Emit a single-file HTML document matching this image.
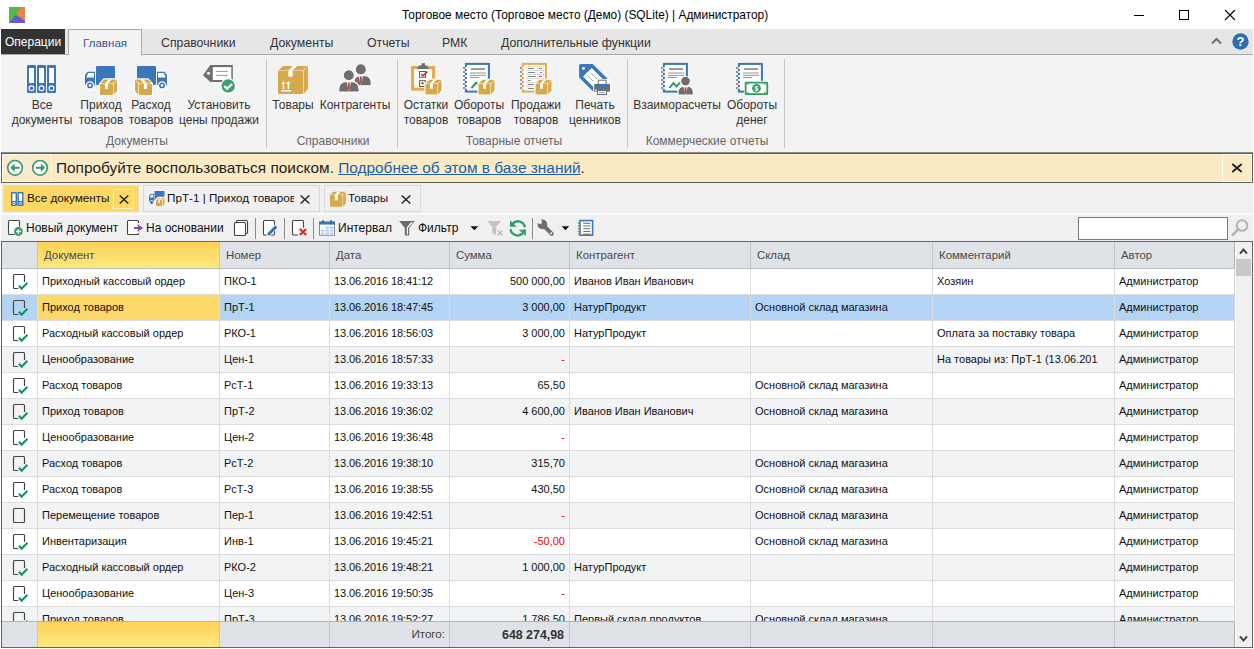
<!DOCTYPE html><html><head><meta charset="utf-8"><style>
*{box-sizing:border-box}
html,body{margin:0;padding:0}
body{width:1254px;height:649px;overflow:hidden;position:relative;background:#fff;font-family:"Liberation Sans",sans-serif;color:#222}
.ab{position:absolute}
.t{position:absolute;white-space:nowrap;line-height:1}
</style></head><body>
<svg class="ab" style="left:9px;top:7px" width="16" height="16" viewBox="0 0 16 16"><rect width="16" height="16" fill="#55b84a"/><polygon points="12,0 16,0 16,14 6.8,7.8" fill="#e3844a"/><polygon points="0,16 6.8,7.8 16,14 16,16" fill="#6559d6"/></svg>
<div class="t" style="left:402px;top:10px;font-size:11.9px;color:#000">Торговое место (Торговое место (Демо) (SQLite) | Администратор)</div>
<div class="ab" style="left:1134px;top:15px;width:10px;height:1px;background:#000"></div>
<div class="ab" style="left:1179px;top:10px;width:10px;height:10px;border:1px solid #000"></div>
<svg class="ab" style="left:1224px;top:9px" width="12" height="12" viewBox="0 0 12 12"><path d="M1 1L11 11M11 1L1 11" stroke="#000" stroke-width="1.1"/></svg>
<div class="ab" style="left:1px;top:29px;width:1252px;height:26px;background:#e6e6e6;border-bottom:1px solid #a8a8a8"></div>
<div class="ab" style="left:1px;top:29px;width:64px;height:25px;background:#333"></div>
<div class="t" style="left:5px;top:36px;font-size:12px;color:#fff">Операции</div>
<div class="ab" style="left:68px;top:29px;width:74px;height:27px;background:#f3f3f3;border:1px solid #a8a8a8;border-bottom:none"></div>
<div class="t" style="left:83px;top:37px;font-size:11.6px;color:#34579c">Главная</div>
<div class="t" style="left:161px;top:37px;font-size:12.3px;color:#333">Справочники</div>
<div class="t" style="left:270px;top:37px;font-size:12.3px;color:#333">Документы</div>
<div class="t" style="left:367px;top:37px;font-size:12.3px;color:#333">Отчеты</div>
<div class="t" style="left:442px;top:37px;font-size:12.3px;color:#333">РМК</div>
<div class="t" style="left:501px;top:37px;font-size:12.3px;color:#333">Дополнительные функции</div>
<svg class="ab" style="left:1211px;top:37px" width="11" height="8" viewBox="0 0 11 8"><path d="M1 6.5L5.5 2L10 6.5" stroke="#707070" stroke-width="2" fill="none"/></svg>
<svg class="ab" style="left:1232px;top:33px" width="17" height="17" viewBox="0 0 17 17"><circle cx="8.5" cy="8.5" r="8.2" fill="#2d6db5"/><text x="8.5" y="13.2" text-anchor="middle" font-family="Liberation Sans" font-weight="bold" font-size="13" fill="#fff">?</text></svg>
<div class="ab" style="left:1px;top:55px;width:1252px;height:97px;background:#f3f3f3"></div>
<div class="ab" style="left:1px;top:152px;width:1252px;height:1px;background:#8a8a8a"></div>
<div class="ab" style="left:266px;top:59px;width:1px;height:89px;background:#c6c6c6"></div>
<div class="ab" style="left:397px;top:59px;width:1px;height:89px;background:#c6c6c6"></div>
<div class="ab" style="left:627px;top:59px;width:1px;height:89px;background:#c6c6c6"></div>
<div class="ab" style="left:784px;top:59px;width:1px;height:89px;background:#c6c6c6"></div>
<div class="t" style="left:-108px;width:300px;text-align:center;top:99px;font-size:12px;color:#333">Все</div>
<div class="t" style="left:-108px;width:300px;text-align:center;top:114px;font-size:12px;color:#333">документы</div>
<div class="t" style="left:-49px;width:300px;text-align:center;top:99px;font-size:12px;color:#333">Приход</div>
<div class="t" style="left:-49px;width:300px;text-align:center;top:114px;font-size:12px;color:#333">товаров</div>
<div class="t" style="left:1px;width:300px;text-align:center;top:99px;font-size:12px;color:#333">Расход</div>
<div class="t" style="left:1px;width:300px;text-align:center;top:114px;font-size:12px;color:#333">товаров</div>
<div class="t" style="left:69px;width:300px;text-align:center;top:99px;font-size:12px;color:#333">Установить</div>
<div class="t" style="left:69px;width:300px;text-align:center;top:114px;font-size:12px;color:#333">цены продажи</div>
<div class="t" style="left:143px;width:300px;text-align:center;top:99px;font-size:12px;color:#333">Товары</div>
<div class="t" style="left:205px;width:300px;text-align:center;top:99px;font-size:12px;color:#333">Контрагенты</div>
<div class="t" style="left:276px;width:300px;text-align:center;top:99px;font-size:12px;color:#333">Остатки</div>
<div class="t" style="left:276px;width:300px;text-align:center;top:114px;font-size:12px;color:#333">товаров</div>
<div class="t" style="left:329px;width:300px;text-align:center;top:99px;font-size:12px;color:#333">Обороты</div>
<div class="t" style="left:329px;width:300px;text-align:center;top:114px;font-size:12px;color:#333">товаров</div>
<div class="t" style="left:386px;width:300px;text-align:center;top:99px;font-size:12px;color:#333">Продажи</div>
<div class="t" style="left:386px;width:300px;text-align:center;top:114px;font-size:12px;color:#333">товаров</div>
<div class="t" style="left:445px;width:300px;text-align:center;top:99px;font-size:12px;color:#333">Печать</div>
<div class="t" style="left:445px;width:300px;text-align:center;top:114px;font-size:12px;color:#333">ценников</div>
<div class="t" style="left:527px;width:300px;text-align:center;top:99px;font-size:12px;color:#333">Взаиморасчеты</div>
<div class="t" style="left:602px;width:300px;text-align:center;top:99px;font-size:12px;color:#333">Обороты</div>
<div class="t" style="left:602px;width:300px;text-align:center;top:114px;font-size:12px;color:#333">денег</div>
<div class="t" style="left:-13px;width:300px;text-align:center;top:135px;font-size:12px;color:#666">Документы</div>
<div class="t" style="left:183px;width:300px;text-align:center;top:135px;font-size:12px;color:#666">Справочники</div>
<div class="t" style="left:364px;width:300px;text-align:center;top:135px;font-size:12px;color:#666">Товарные отчеты</div>
<div class="t" style="left:557px;width:300px;text-align:center;top:135px;font-size:12px;color:#666">Коммерческие отчеты</div>
<svg class="ab" style="left:0;top:55px" width="800" height="100" viewBox="0 55 800 100"><rect x="27" y="65" width="9" height="28" rx="1.3" fill="#3b76b8"/><rect x="29" y="68" width="5" height="15" fill="#fff"/><circle cx="31.5" cy="88.3" r="2.4" fill="none" stroke="#fff" stroke-width="1.1"/><rect x="37" y="65" width="9" height="28" rx="1.3" fill="#3b76b8"/><rect x="39" y="68" width="5" height="15" fill="#fff"/><circle cx="41.5" cy="88.3" r="2.4" fill="none" stroke="#fff" stroke-width="1.1"/><rect x="47" y="65" width="9" height="28" rx="1.3" fill="#3b76b8"/><rect x="49" y="68" width="5" height="15" fill="#fff"/><circle cx="51.5" cy="88.3" r="2.4" fill="none" stroke="#fff" stroke-width="1.1"/><g transform="translate(85,63)"><rect x="11" y="3" width="19" height="19" rx="1.2" fill="#3b76b8"/><path d="M0 22 V12 L2.6 8.7 H10 V22 Z" fill="#3b76b8"/><path d="M1.4 14.6 L3.2 10 H9 V14.6 Z" fill="#fff"/><circle cx="5" cy="22.4" r="3.6" fill="#3b76b8" stroke="#fff" stroke-width="1.3"/><circle cx="5" cy="22.4" r="1.3" fill="#fff"/><polygon points="15,32 15,21 19,16.4 32,16.4 32,28 28,32" fill="#fff" stroke="#fff" stroke-width="2.2" stroke-linejoin="round"/><rect x="15" y="21" width="13" height="11" rx="0.8" fill="#d6a94c"/><polygon points="15.3,20.4 19,16.4 32,16.4 27.7,20.4" fill="#d6a94c"/><polygon points="28.6,20.7 32,16.7 32,28 28.6,32" fill="#d6a94c"/><rect x="19.94" y="21" width="3.12" height="4.95" fill="#fff"/><polygon points="19.94,20.4 23.540000000000003,16.4 26.660000000000004,16.4 23.060000000000002,20.4" fill="#fff"/></g><g transform="translate(167,63) scale(-1,1)"><rect x="11" y="3" width="19" height="19" rx="1.2" fill="#3b76b8"/><path d="M0 22 V12 L2.6 8.7 H10 V22 Z" fill="#3b76b8"/><path d="M1.4 14.6 L3.2 10 H9 V14.6 Z" fill="#fff"/><circle cx="5" cy="22.4" r="3.6" fill="#3b76b8" stroke="#fff" stroke-width="1.3"/><circle cx="5" cy="22.4" r="1.3" fill="#fff"/><polygon points="15,32 15,21 19,16.4 32,16.4 32,28 28,32" fill="#fff" stroke="#fff" stroke-width="2.2" stroke-linejoin="round"/><rect x="15" y="21" width="13" height="11" rx="0.8" fill="#d6a94c"/><polygon points="15.3,20.4 19,16.4 32,16.4 27.7,20.4" fill="#d6a94c"/><polygon points="28.6,20.7 32,16.7 32,28 28.6,32" fill="#d6a94c"/><rect x="19.94" y="21" width="3.12" height="4.95" fill="#fff"/><polygon points="19.94,20.4 23.540000000000003,16.4 26.660000000000004,16.4 23.060000000000002,20.4" fill="#fff"/></g><g transform="translate(198,60)"><path d="M5 15.3 L12.3 5 H34.8 V22 H12.3 Z" fill="#6e6e6e"/><rect x="14.8" y="7.1" width="18.5" height="12.9" fill="#fff"/><rect x="18.2" y="10.9" width="11.7" height="1" fill="#9a9a9a"/><rect x="18.2" y="14.9" width="11.7" height="1" fill="#9a9a9a"/><circle cx="10.5" cy="13.3" r="1.5" fill="#fff"/><circle cx="30.2" cy="25.9" r="7.3" fill="#3fa072" stroke="#fff" stroke-width="1.2"/><path d="M26.3 26 L29.2 28.8 L34.2 23.7" stroke="#fff" stroke-width="2.2" fill="none"/></g><rect x="278" y="71" width="25" height="23" rx="0.8" fill="#d6a94c"/><polygon points="278.3,70.4 283,66 308,66 302.7,70.4" fill="#d6a94c"/><polygon points="303.6,70.7 308,66.3 308,89 303.6,94" fill="#d6a94c"/><rect x="288.4" y="71" width="4.2" height="5.6" fill="#fff"/><polygon points="288.4,70.4 292.9,66 297.09999999999997,66 292.59999999999997,70.4" fill="#fff"/><g fill="#fff"><path d="M283.4 81 L281.2 84 H282.7 V88.9 H284.1 V84 H285.6 Z"/><path d="M288.4 81 L286.2 84 H287.7 V88.9 H289.1 V84 H290.6 Z"/><rect x="281.1" y="90" width="9.7" height="1.5"/></g><path d="M353.8 84.80000000000001 V82.708 C353.8 77.9578 356.3578 75.4 361.108 75.4 H363.892 C368.6422 75.4 371.2 77.9578 371.2 82.708 V84.80000000000001 Q371.2 85.80000000000001 370.2 85.80000000000001 H354.8 Q353.8 85.80000000000001 353.8 84.80000000000001 Z" fill="#6e6e6e" stroke="#fff" stroke-width="1.1"/><circle cx="360.8" cy="69.4" r="5.6" fill="#6e6e6e" stroke="#fff" stroke-width="1.1"/><path d="M358.40000000000003 75.10000000000001 L360.8 85.00000000000001 L363.2 75.10000000000001 Z" fill="#fff"/><path d="M359.8 76.60000000000001 H361.8 L361.6 82.68 L360.8 83.80000000000001 L360.0 82.68 Z" fill="#d03a2a"/><path d="M338.6 91.0 V89.88000000000001 C338.6 84.36800000000001 341.56800000000004 81.4 347.08000000000004 81.4 H350.72 C356.232 81.4 359.20000000000005 84.36800000000001 359.20000000000005 89.88000000000001 V91.0 Q359.20000000000005 92.0 358.20000000000005 92.0 H339.6 Q338.6 92.0 338.6 91.0 Z" fill="#6e6e6e" stroke="#fff" stroke-width="1.1"/><circle cx="348.8" cy="75.3" r="5.6" fill="#6e6e6e" stroke="#fff" stroke-width="1.1"/><path d="M346.40000000000003 81.10000000000001 L348.8 91.2 L351.2 81.10000000000001 Z" fill="#fff"/><path d="M347.8 82.60000000000001 H349.8 L349.6 88.82000000000001 L348.8 90.0 L348.0 88.82000000000001 Z" fill="#d03a2a"/><g transform="translate(408,58)"><rect x="4.6" y="9.5" width="21" height="21.7" fill="#fff" stroke="#e8a94c" stroke-width="3"/><path d="M9 11 L11 7.5 H13.5 V5.2 H17 V7.5 H19 L21 11 Z" fill="#6e6e6e"/><rect x="11.6" y="13.5" width="5.8" height="5.8" fill="none" stroke="#555" stroke-width="1"/><rect x="11.6" y="22.7" width="5.8" height="5.8" fill="none" stroke="#555" stroke-width="1"/><path d="M13.3 16 L15 17.8 L19.5 13.5" stroke="#cc3322" stroke-width="1.6" fill="none"/><path d="M13.5 24.5 L15.5 26" stroke="#cc3322" stroke-width="1.6" fill="none"/><polygon points="17.5,36.5 17.5,26 21.5,21.8 33.5,21.8 33.5,32.5 29.5,36.5" fill="#fff" stroke="#fff" stroke-width="2.2" stroke-linejoin="round"/><rect x="17.5" y="26" width="12" height="10.5" rx="0.8" fill="#d6a94c"/><polygon points="17.8,25.4 21.5,21.8 33.5,21.8 29.2,25.4" fill="#d6a94c"/><polygon points="30.1,25.7 33.5,22.1 33.5,32.5 30.1,36.5" fill="#d6a94c"/><rect x="22.06" y="26" width="2.88" height="4.7250000000000005" fill="#fff"/><polygon points="22.06,25.4 25.66,21.8 28.54,21.8 24.939999999999998,25.4" fill="#fff"/></g><g transform="translate(460,58)"><rect x="5.9" y="5.9" width="23" height="27.7" fill="#fff" stroke="#3b76b8" stroke-width="2"/><rect x="3" y="9.1" width="2.2" height="1.8" fill="#8a8a8a"/><rect x="5.2" y="9.1" width="2" height="1.8" fill="#fff"/><rect x="3" y="13.1" width="2.2" height="1.8" fill="#8a8a8a"/><rect x="5.2" y="13.1" width="2" height="1.8" fill="#fff"/><rect x="3" y="17.1" width="2.2" height="1.8" fill="#8a8a8a"/><rect x="5.2" y="17.1" width="2" height="1.8" fill="#fff"/><rect x="3" y="21.1" width="2.2" height="1.8" fill="#8a8a8a"/><rect x="5.2" y="21.1" width="2" height="1.8" fill="#fff"/><rect x="3" y="25.1" width="2.2" height="1.8" fill="#8a8a8a"/><rect x="5.2" y="25.1" width="2" height="1.8" fill="#fff"/><rect x="3" y="29.1" width="2.2" height="1.8" fill="#8a8a8a"/><rect x="5.2" y="29.1" width="2" height="1.8" fill="#fff"/><rect x="11" y="10.2" width="14" height="1.7" fill="#8a8a8a"/><rect x="10" y="14.55" width="16" height="0.9" fill="#8a8a8a"/><rect x="10" y="16.85" width="16" height="0.9" fill="#8a8a8a"/><rect x="10" y="19.05" width="9" height="0.9" fill="#8a8a8a"/></g><g transform="translate(460,58)"><path d="M11.5 30 L16 25" stroke="#2f9b62" stroke-width="2" fill="none"/><path d="M14.2 24 H17.6 V27.4 Z" fill="#2f9b62"/></g><g transform="translate(460,58)"><polygon points="18.5,36.5 18.5,26 22.5,21.8 34.5,21.8 34.5,32.5 30.5,36.5" fill="#fff" stroke="#fff" stroke-width="2.2" stroke-linejoin="round"/><rect x="18.5" y="26" width="12" height="10.5" rx="0.8" fill="#d6a94c"/><polygon points="18.8,25.4 22.5,21.8 34.5,21.8 30.2,25.4" fill="#d6a94c"/><polygon points="31.1,25.7 34.5,22.1 34.5,32.5 31.1,36.5" fill="#d6a94c"/><rect x="23.06" y="26" width="2.88" height="4.7250000000000005" fill="#fff"/><polygon points="23.06,25.4 26.66,21.8 29.54,21.8 25.939999999999998,25.4" fill="#fff"/></g><g transform="translate(517,58)"><rect x="5.9" y="5.9" width="23" height="27.7" fill="#fff" stroke="#e8a94c" stroke-width="2"/><rect x="3" y="9.1" width="2.2" height="1.8" fill="#8a8a8a"/><rect x="5.2" y="9.1" width="2" height="1.8" fill="#fff"/><rect x="3" y="13.1" width="2.2" height="1.8" fill="#8a8a8a"/><rect x="5.2" y="13.1" width="2" height="1.8" fill="#fff"/><rect x="3" y="17.1" width="2.2" height="1.8" fill="#8a8a8a"/><rect x="5.2" y="17.1" width="2" height="1.8" fill="#fff"/><rect x="3" y="21.1" width="2.2" height="1.8" fill="#8a8a8a"/><rect x="5.2" y="21.1" width="2" height="1.8" fill="#fff"/><rect x="3" y="25.1" width="2.2" height="1.8" fill="#8a8a8a"/><rect x="5.2" y="25.1" width="2" height="1.8" fill="#fff"/><rect x="3" y="29.1" width="2.2" height="1.8" fill="#8a8a8a"/><rect x="5.2" y="29.1" width="2" height="1.8" fill="#fff"/></g><g transform="translate(517,58)"><rect x="9.5" y="8.2" width="17.5" height="24.5" fill="#d4d4d4"/><rect x="10.2" y="8.9" width="9.8" height="3.2" fill="#fff"/><rect x="20.6" y="8.9" width="5.8" height="3.2" fill="#fff"/><rect x="11" y="10.1" width="6" height="0.9" fill="#777"/><rect x="10.2" y="12.9" width="9.8" height="3.2" fill="#fff"/><rect x="20.6" y="12.9" width="5.8" height="3.2" fill="#fff"/><rect x="11" y="14.1" width="7" height="0.9" fill="#777"/><rect x="10.2" y="16.9" width="9.8" height="3.2" fill="#fff"/><rect x="20.6" y="16.9" width="5.8" height="3.2" fill="#fff"/><rect x="11" y="18.099999999999998" width="8" height="0.9" fill="#777"/><rect x="10.2" y="20.9" width="9.8" height="3.2" fill="#fff"/><rect x="20.6" y="20.9" width="5.8" height="3.2" fill="#fff"/><rect x="11" y="22.099999999999998" width="2.5" height="0.9" fill="#777"/><rect x="10.2" y="24.9" width="9.8" height="3.2" fill="#fff"/><rect x="20.6" y="24.9" width="5.8" height="3.2" fill="#fff"/><rect x="11" y="26.099999999999998" width="6" height="0.9" fill="#777"/><rect x="10.2" y="28.9" width="9.8" height="3.2" fill="#fff"/><rect x="20.6" y="28.9" width="5.8" height="3.2" fill="#fff"/><rect x="11" y="30.099999999999998" width="6" height="0.9" fill="#777"/><rect x="22" y="10.1" width="3" height="0.9" fill="#777"/><rect x="23" y="14.1" width="2" height="0.9" fill="#777"/><rect x="22" y="18.1" width="3" height="0.9" fill="#cc3322"/><polygon points="18.5,36.5 18.5,26 22.5,21.8 34.5,21.8 34.5,32.5 30.5,36.5" fill="#fff" stroke="#fff" stroke-width="2.2" stroke-linejoin="round"/><rect x="18.5" y="26" width="12" height="10.5" rx="0.8" fill="#d6a94c"/><polygon points="18.8,25.4 22.5,21.8 34.5,21.8 30.2,25.4" fill="#d6a94c"/><polygon points="31.1,25.7 34.5,22.1 34.5,32.5 31.1,36.5" fill="#d6a94c"/><rect x="23.06" y="26" width="2.88" height="4.7250000000000005" fill="#fff"/><polygon points="23.06,25.4 26.66,21.8 29.54,21.8 25.939999999999998,25.4" fill="#fff"/></g><g transform="translate(576,58)"><path d="M3.1 7.5 Q3.1 5.9 4.7 5.9 H16.7 L34 23.2 V25 L16.7 33 L3.1 19.5 Z" fill="#3b76b8"/><path d="M7 18.5 L15.7 10 L28 22.3 L19.3 31 Z" fill="#fff"/><path d="M15 15 L21 21 M12 18 L18.5 24.5" stroke="#888" stroke-width="0.8"/><circle cx="7.5" cy="10.5" r="1.4" fill="#fff"/><rect x="17.2" y="21" width="17.8" height="15" fill="#fff"/><rect x="22.3" y="22.2" width="7.8" height="4.5" fill="#fff" stroke="#6e6e6e" stroke-width="1"/><rect x="18.2" y="25.9" width="15.8" height="7.7" fill="#6e6e6e"/><rect x="21" y="26.2" width="10" height="2.8" fill="#3b76b8"/><rect x="19" y="31.5" width="2" height="1" fill="#fff"/><rect x="21.5" y="32.5" width="9" height="4" fill="#fff" stroke="#6e6e6e" stroke-width="1"/><rect x="23" y="34" width="6" height="0.8" fill="#6a9ad0"/></g><g transform="translate(658,58)"><rect x="5.9" y="5.9" width="23" height="27.7" fill="#fff" stroke="#3b76b8" stroke-width="2"/><rect x="3" y="9.1" width="2.2" height="1.8" fill="#8a8a8a"/><rect x="5.2" y="9.1" width="2" height="1.8" fill="#fff"/><rect x="3" y="13.1" width="2.2" height="1.8" fill="#8a8a8a"/><rect x="5.2" y="13.1" width="2" height="1.8" fill="#fff"/><rect x="3" y="17.1" width="2.2" height="1.8" fill="#8a8a8a"/><rect x="5.2" y="17.1" width="2" height="1.8" fill="#fff"/><rect x="3" y="21.1" width="2.2" height="1.8" fill="#8a8a8a"/><rect x="5.2" y="21.1" width="2" height="1.8" fill="#fff"/><rect x="3" y="25.1" width="2.2" height="1.8" fill="#8a8a8a"/><rect x="5.2" y="25.1" width="2" height="1.8" fill="#fff"/><rect x="3" y="29.1" width="2.2" height="1.8" fill="#8a8a8a"/><rect x="5.2" y="29.1" width="2" height="1.8" fill="#fff"/><rect x="11" y="10.2" width="14" height="1.7" fill="#8a8a8a"/><rect x="10" y="14.55" width="16" height="0.9" fill="#8a8a8a"/><rect x="10" y="16.85" width="16" height="0.9" fill="#8a8a8a"/><rect x="10" y="19.05" width="9" height="0.9" fill="#8a8a8a"/></g><g transform="translate(658,58)"><path d="M11.5 30 L15.5 25 L18.5 28.5 L22 24.5" stroke="#2f9b62" stroke-width="2" fill="none"/><path d="M20 36.0 V34.768 C20 30.5638 22.2638 28.3 26.468 28.3 H28.932 C33.1362 28.3 35.4 30.5638 35.4 34.768 V36.0 Q35.4 37.0 34.4 37.0 H21 Q20 37.0 20 36.0 Z" fill="#6e6e6e" stroke="#fff" stroke-width="1.1"/><circle cx="27.5" cy="23.1" r="4.9" fill="#6e6e6e" stroke="#fff" stroke-width="1.1"/><path d="M25.1 28.0 L27.5 36.2 L29.9 28.0 Z" fill="#fff"/><path d="M26.5 29.5 H28.5 L28.3 34.39 L27.5 35.0 L26.7 34.39 Z" fill="#d03a2a"/></g><g transform="translate(733,58)"><rect x="5.9" y="5.9" width="23" height="27.7" fill="#fff" stroke="#3b76b8" stroke-width="2"/><rect x="3" y="9.1" width="2.2" height="1.8" fill="#8a8a8a"/><rect x="5.2" y="9.1" width="2" height="1.8" fill="#fff"/><rect x="3" y="13.1" width="2.2" height="1.8" fill="#8a8a8a"/><rect x="5.2" y="13.1" width="2" height="1.8" fill="#fff"/><rect x="3" y="17.1" width="2.2" height="1.8" fill="#8a8a8a"/><rect x="5.2" y="17.1" width="2" height="1.8" fill="#fff"/><rect x="3" y="21.1" width="2.2" height="1.8" fill="#8a8a8a"/><rect x="5.2" y="21.1" width="2" height="1.8" fill="#fff"/><rect x="3" y="25.1" width="2.2" height="1.8" fill="#8a8a8a"/><rect x="5.2" y="25.1" width="2" height="1.8" fill="#fff"/><rect x="3" y="29.1" width="2.2" height="1.8" fill="#8a8a8a"/><rect x="5.2" y="29.1" width="2" height="1.8" fill="#fff"/><rect x="11" y="10.2" width="14" height="1.7" fill="#8a8a8a"/><rect x="10" y="14.55" width="16" height="0.9" fill="#8a8a8a"/><rect x="10" y="16.85" width="16" height="0.9" fill="#8a8a8a"/><rect x="10" y="19.05" width="9" height="0.9" fill="#8a8a8a"/></g><g transform="translate(733,58)"><rect x="11" y="22.8" width="24.9" height="15" fill="#fff"/><rect x="12.6" y="24.6" width="21.7" height="11.6" rx="0.5" fill="#fff" stroke="#2e9b62" stroke-width="1.8"/><circle cx="23.5" cy="30.2" r="4.3" fill="#2e9b62"/><text x="23.5" y="32.7" text-anchor="middle" font-family="Liberation Sans" font-weight="bold" font-size="7" fill="#fff">$</text><path d="M13.5 25.5 h2 v2 Z M33.4 25.5 h-2 v2 Z M13.5 35.3 h2 v-2 Z M33.4 35.3 h-2 v-2 Z" fill="#2e9b62"/></g></svg>
<div class="ab" style="left:1px;top:153px;width:1252px;height:30px;background:#faebc4;border:1px solid #5e5e5e"></div><div class="ab" style="left:2px;top:154px;width:50px;height:28px;border:1px solid #fdfbf5"></div><div class="ab" style="left:26px;top:155px;width:2px;height:26px;background:#ededed"></div><div class="ab" style="left:51px;top:155px;width:1px;height:26px;background:#fdfbf5"></div><div class="ab" style="left:1222px;top:154px;width:30px;height:28px;border:1px solid #fdfbf5;border-right-width:1px"></div><svg class="ab" style="left:0;top:150px" width="60" height="36" viewBox="0 150 60 36"><circle cx="15" cy="167.8" r="7.3" fill="#fff" stroke="#36996a" stroke-width="1.6"/><circle cx="40" cy="167.8" r="7.3" fill="#fff" stroke="#36996a" stroke-width="1.6"/><path d="M11 167.8H19.6" stroke="#36996a" stroke-width="2"/><path d="M10.4 167.8 L14.6 163.6 V172 Z" fill="#36996a"/><path d="M35.8 167.8H44.4" stroke="#36996a" stroke-width="2"/><path d="M45 167.8 L40.8 163.6 V172 Z" fill="#36996a"/></svg><div class="t" style="left:56px;top:160px;font-size:15.4px;color:#1e1e1e">Попробуйте воспользоваться поиском. <span style="color:#1a5fb4;text-decoration:underline">Подробнее об этом в базе знаний</span>.</div><svg class="ab" style="left:1231px;top:163px" width="12" height="10" viewBox="0 0 12 10"><path d="M1.3 1L10.7 9M10.7 1L1.3 9" stroke="#1a1a1a" stroke-width="1.7"/></svg>
<div class="ab" style="left:1px;top:183px;width:1252px;height:30px;background:#f0f0f0"></div><div class="ab" style="left:1px;top:213px;width:1252px;height:2px;background:#f9f9f9"></div><div class="ab" style="left:3px;top:185px;width:136px;height:27px;background:#fdd865;border:1px solid #e6dcb8"></div><div class="ab" style="left:113px;top:189px;width:21px;height:20px;border:1px solid #fdf0c0"></div><svg class="ab" style="left:10px;top:191px" width="16" height="16" viewBox="0 0 16 16"><rect x="1" y="1" width="6" height="14" rx="0.8" fill="#3b76b8"/><rect x="2.4" y="2.5" width="3.2" height="7.5" fill="#fff"/><circle cx="4" cy="12.5" r="1.1" fill="none" stroke="#fff" stroke-width="0.8"/><rect x="7.5" y="1" width="6" height="14" rx="0.8" fill="#3b76b8"/><rect x="8.9" y="2.5" width="3.2" height="7.5" fill="#fff"/><circle cx="10.5" cy="12.5" r="1.1" fill="none" stroke="#fff" stroke-width="0.8"/></svg><div class="t" style="left:27px;top:192px;font-size:11.7px;color:#111">Все документы</div><div class="ab" style="left:143px;top:185px;width:177px;height:27px;background:#f0f0f0;border:1px solid #d9d9d9"></div><svg class="ab" style="left:149px;top:191px" width="16" height="16" viewBox="0 0 16 16"><rect x="5.5" y="0" width="10" height="9" fill="#3b76b8"/><path d="M0 11 V5 L1.5 3 H5 V11 Z" fill="#3b76b8"/><path d="M0.8 6.5 L1.8 4 H4.3 V6.5Z" fill="#fff"/><circle cx="2.6" cy="11.5" r="2" fill="#3b76b8" stroke="#fff" stroke-width="0.8"/><polygon points="7,15.2 7,9 9.2,6.8 15.7,6.8 15.7,13.0 13.5,15.2" fill="#fff" stroke="#fff" stroke-width="2.2" stroke-linejoin="round"/><rect x="7" y="9" width="6.5" height="6.2" rx="0.8" fill="#d6a94c"/><polygon points="7.3,8.4 9.2,6.8 15.7,6.8 13.2,8.4" fill="#d6a94c"/><polygon points="14.1,8.7 15.7,7.1 15.7,13.0 14.1,15.2" fill="#d6a94c"/><rect x="9.47" y="9" width="1.56" height="2.79" fill="#fff"/><polygon points="9.47,8.4 11.450000000000001,6.8 13.010000000000002,6.8 11.030000000000001,8.4" fill="#fff"/></svg><div class="t" style="left:167px;top:192px;font-size:11.7px;color:#111;width:127px;overflow:hidden">ПрТ-1 | Приход товаров</div><div class="ab" style="left:324px;top:185px;width:97px;height:27px;background:#f0f0f0;border:1px solid #d9d9d9"></div><svg class="ab" style="left:330px;top:191px" width="16" height="17" viewBox="0 0 16 17"><rect x="0" y="4" width="12.5" height="11.8" rx="0.8" fill="#d6a94c"/><polygon points="0.3,3.4 3.3,0.7999999999999998 15.8,0.7999999999999998 12.2,3.4" fill="#d6a94c"/><polygon points="13.1,3.7 15.8,1.0999999999999999 15.8,12.5 13.1,15.8" fill="#d6a94c"/><rect x="4.75" y="4" width="3.0" height="5.3100000000000005" fill="#fff"/><polygon points="4.75,3.4 7.72,0.7999999999999998 10.719999999999999,0.7999999999999998 7.75,3.4" fill="#fff"/></svg><div class="t" style="left:348px;top:192px;font-size:11.7px;color:#111">Товары</div><svg class="ab" style="left:119px;top:195px" width="10" height="9" viewBox="0 0 10 9"><path d="M0.7 0.5L9.3 8.5M9.3 0.5L0.7 8.5" stroke="#222" stroke-width="1.4"/></svg><svg class="ab" style="left:300px;top:195px" width="10" height="9" viewBox="0 0 10 9"><path d="M0.7 0.5L9.3 8.5M9.3 0.5L0.7 8.5" stroke="#222" stroke-width="1.4"/></svg><svg class="ab" style="left:401px;top:195px" width="10" height="9" viewBox="0 0 10 9"><path d="M0.7 0.5L9.3 8.5M9.3 0.5L0.7 8.5" stroke="#222" stroke-width="1.4"/></svg>
<div class="ab" style="left:1px;top:215px;width:1252px;height:26px;background:#f0f0f0"></div><div class="t" style="left:26px;top:222px;font-size:12px;color:#111">Новый документ</div><div class="t" style="left:146px;top:222px;font-size:12px;color:#111">На основании</div><div class="t" style="left:338px;top:222px;font-size:12px;color:#111">Интервал</div><div class="t" style="left:418px;top:222px;font-size:12px;color:#111">Фильтр</div><div class="ab" style="left:255px;top:218px;width:1px;height:21px;background:#8a8a8a"></div><div class="ab" style="left:284px;top:218px;width:1px;height:21px;background:#8a8a8a"></div><div class="ab" style="left:313px;top:218px;width:1px;height:21px;background:#8a8a8a"></div><div class="ab" style="left:532px;top:218px;width:1px;height:21px;background:#8a8a8a"></div><div class="ab" style="left:1078px;top:217px;width:150px;height:23px;background:#fff;border:1px solid #7a7a7a"></div><svg class="ab" style="left:0;top:215px" width="600" height="26" viewBox="0 215 600 26"><rect x="8.5" y="220.5" width="11" height="14" rx="1" fill="#fff" stroke="#444" stroke-width="1.1"/><circle cx="18.4" cy="231.5" r="5" fill="#f0f0f0"/><circle cx="18.4" cy="231.5" r="4.4" fill="#3a9a6a"/><path d="M18.4 229V234M15.9 231.5H20.9" stroke="#fff" stroke-width="1.3"/><path d="M138.5 223 V221.5 Q138.5 220.5 137.5 220.5 H128.5 Q127.5 220.5 127.5 221.5 V233.5 Q127.5 234.5 128.5 234.5 H137.5 Q138.5 234.5 138.5 233.5 V233" fill="#fff" stroke="#444" stroke-width="1.1"/><path d="M134 228 H140" stroke="#8b44b0" stroke-width="2"/><path d="M137.2 224 L143.1 228 L137.2 232 L138.5 228 Z" fill="#8b44b0"/><rect x="236.5" y="220.5" width="11" height="13" rx="1" fill="#fff" stroke="#444" stroke-width="1.1"/><rect x="234.5" y="222.5" width="11" height="13" rx="1" fill="#fff" stroke="#444" stroke-width="1.1"/><rect x="263.5" y="220.5" width="11" height="14.5" rx="1" fill="#fff" stroke="#444" stroke-width="1.1"/><path d="M266.3 236.2 L267.2 232.2 L275 224.4 L278.2 227.6 L270.4 235.4 Z" fill="#f0f0f0"/><path d="M267.3 235.6 L268 232.7 L275.2 225.5 L277.3 227.6 L270.1 234.8 Z" fill="#2f6fb8"/><rect x="292.5" y="220.5" width="11" height="14.5" rx="1" fill="#fff" stroke="#444" stroke-width="1.1"/><rect x="298" y="227.5" width="10" height="9" fill="#f0f0f0"/><path d="M299.8 229 L306.2 235 M306.2 229 L299.8 235" stroke="#d32a1a" stroke-width="2"/><rect x="319.5" y="222" width="15" height="13.3" fill="#fff" stroke="#8a8a8a" stroke-width="1"/><rect x="319" y="221.6" width="16" height="3" fill="#3b76b8"/><rect x="322.3" y="220" width="1.4" height="3.2" fill="#555"/><rect x="330.3" y="220" width="1.4" height="3.2" fill="#555"/><rect x="321" y="229" width="12.5" height="5.5" fill="#a9cdee"/><rect x="325.5" y="226" width="8" height="3" fill="#a9cdee"/><path d="M320 229.2H334 M320 232H334 M325 225V235 M329.5 225V235 M325 226.2H334" stroke="#fff" stroke-width="0.9"/><path d="M399.2 221 H414.8 L409.2 228 V235.5 L404.8 235.5 V228 Z" fill="#6a6a6a"/><path d="M411 222.3 H413 L407.9 228.2 V234.6 H406.8 V227.6 Z" fill="#fff"/><path d="M470.4 226.2 H478.3 L474.35 230.2 Z" fill="#111"/><path d="M487.5 221 H501 L496.2 227 V235 L492.3 233.3 V227 Z" fill="#c4c4c4"/><path d="M497.8 230.8 L502.3 235.3 M502.3 230.8 L497.8 235.3" stroke="#b8b8b8" stroke-width="1.5"/><path d="M525 227.2 A7.2 7.2 0 0 0 512.6 223.6" stroke="#2e9e6a" stroke-width="2.4" fill="none"/><path d="M510 220.2 V226.8 H516.8 Z" fill="#2e9e6a"/><path d="M510.5 229.2 A7.2 7.2 0 0 0 523 233" stroke="#2e9e6a" stroke-width="2.4" fill="none"/><path d="M518.8 229.9 L525.9 229.2 V235.9 Z" fill="#2e9e6a"/><path d="M542.5 224.5 L551.8 233.8" stroke="#6e6e6e" stroke-width="4" stroke-linecap="round"/><circle cx="542.4" cy="224.4" r="4.9" fill="#6e6e6e"/><circle cx="539.9" cy="221.9" r="2.1" fill="#f0f0f0"/><path d="M538.4 223.4 L541.4 220.4 L537 216 L534 219 Z" fill="#f0f0f0"/><circle cx="551.2" cy="233.2" r="1" fill="#fff"/><path d="M561.7 226.2 H569.2 L565.45 230.2 Z" fill="#111"/><rect x="580" y="220.6" width="12.6" height="14.6" fill="#fff" stroke="#3b76b8" stroke-width="1.6"/><rect x="577.8" y="222.6" width="3" height="1.3" fill="#888"/><rect x="583.3" y="222.79999999999998" width="7" height="1" fill="#666"/><rect x="577.8" y="225.29999999999998" width="3" height="1.3" fill="#888"/><rect x="583.3" y="225.49999999999997" width="7" height="1" fill="#666"/><rect x="577.8" y="228.0" width="3" height="1.3" fill="#888"/><rect x="583.3" y="228.2" width="7" height="1" fill="#666"/><rect x="577.8" y="230.7" width="3" height="1.3" fill="#888"/><rect x="583.3" y="230.89999999999998" width="7" height="1" fill="#666"/><rect x="577.8" y="233.4" width="3" height="1.3" fill="#888"/><rect x="583.3" y="233.6" width="7" height="1" fill="#666"/></svg><svg class="ab" style="left:1230px;top:218px" width="20" height="20" viewBox="0 0 20 20"><circle cx="12" cy="7.5" r="5.3" fill="none" stroke="#b4b4b4" stroke-width="2"/><path d="M8.3 11.2 L2.8 16.8" stroke="#b4b4b4" stroke-width="2.6" stroke-linecap="round"/></svg>
<div class="ab" style="left:1px;top:241px;width:1252px;height:407px;border:1px solid #646464;background:#fff"></div>
<div class="ab" style="left:2px;top:242px;width:1233px;height:27px;background:#dfe2e7;border-bottom:1px solid #b9bdc4"></div>
<div class="ab" style="left:38px;top:242px;width:182px;height:26px;background:linear-gradient(#fdd35a,#fee77c)"></div>
<div class="t" style="left:44px;top:250px;font-size:11.4px;color:#4a4a4a">Документ</div>
<div class="t" style="left:226px;top:250px;font-size:11.4px;color:#4a4a4a">Номер</div>
<div class="t" style="left:336px;top:250px;font-size:11.4px;color:#4a4a4a">Дата</div>
<div class="t" style="left:456px;top:250px;font-size:11.4px;color:#4a4a4a">Сумма</div>
<div class="t" style="left:576px;top:250px;font-size:11.4px;color:#4a4a4a">Контрагент</div>
<div class="t" style="left:757px;top:250px;font-size:11.4px;color:#4a4a4a">Склад</div>
<div class="t" style="left:939px;top:250px;font-size:11.4px;color:#4a4a4a">Комментарий</div>
<div class="t" style="left:1121px;top:250px;font-size:11.4px;color:#4a4a4a">Автор</div>
<div class="ab" style="left:37px;top:242px;width:1px;height:26px;background:#c3c6cc"></div>
<div class="ab" style="left:219px;top:242px;width:1px;height:26px;background:#c3c6cc"></div>
<div class="ab" style="left:329px;top:242px;width:1px;height:26px;background:#c3c6cc"></div>
<div class="ab" style="left:449px;top:242px;width:1px;height:26px;background:#c3c6cc"></div>
<div class="ab" style="left:569px;top:242px;width:1px;height:26px;background:#c3c6cc"></div>
<div class="ab" style="left:750px;top:242px;width:1px;height:26px;background:#c3c6cc"></div>
<div class="ab" style="left:932px;top:242px;width:1px;height:26px;background:#c3c6cc"></div>
<div class="ab" style="left:1114px;top:242px;width:1px;height:26px;background:#c3c6cc"></div>
<div class="ab" style="left:2px;top:269px;width:1233px;height:352px;overflow:hidden">
<div class="ab" style="left:0;top:0px;width:1233px;height:26px;background:#ffffff;border-bottom:1px solid #dcdcdc"></div>
<div class="ab" style="left:35px;top:0px;width:1px;height:26px;background:#dcdcdc"></div>
<div class="ab" style="left:217px;top:0px;width:1px;height:26px;background:#dcdcdc"></div>
<div class="ab" style="left:327px;top:0px;width:1px;height:26px;background:#dcdcdc"></div>
<div class="ab" style="left:447px;top:0px;width:1px;height:26px;background:#dcdcdc"></div>
<div class="ab" style="left:567px;top:0px;width:1px;height:26px;background:#dcdcdc"></div>
<div class="ab" style="left:748px;top:0px;width:1px;height:26px;background:#dcdcdc"></div>
<div class="ab" style="left:930px;top:0px;width:1px;height:26px;background:#dcdcdc"></div>
<div class="ab" style="left:1112px;top:0px;width:1px;height:26px;background:#dcdcdc"></div>
<svg class="ab" style="left:0;top:0px" width="30" height="26" viewBox="0 0 30 26"><path d="M16.2 19.5 H12.5 Q11.5 19.5 11.5 18.5 V6.5 Q11.5 5.5 12.5 5.5 H21.5 Q22.5 5.5 22.5 6.5 V12.9" stroke="#444" stroke-width="1.15" fill="none"/><path d="M16.9 16.7 L19.6 19.8 L25.4 13.8" stroke="#16935a" stroke-width="2.1" fill="none"/></svg>
<div class="t" style="left:40px;top:7px;font-size:11px;color:#111;">Приходный кассовый ордер</div>
<div class="t" style="left:222px;top:7px;font-size:11px;color:#111;">ПКО-1</div>
<div class="t" style="left:332px;top:7px;font-size:11px;color:#111;letter-spacing:-0.1px;">13.06.2016 18:41:12</div>
<div class="t" style="left:448px;width:115px;text-align:right;top:7px;font-size:11px;color:#111">500 000,00</div>
<div class="t" style="left:572px;top:7px;font-size:11px;color:#111;">Иванов Иван Иванович</div>
<div class="t" style="left:935px;top:7px;font-size:11px;color:#111;">Хозяин</div>
<div class="t" style="left:1117px;top:7px;font-size:11px;color:#111;">Администратор</div>
<div class="ab" style="left:0;top:26px;width:1233px;height:26px;background:#b3d4f5;border-bottom:1px solid #dcdcdc"></div>
<div class="ab" style="left:36px;top:26px;width:182px;height:25px;background:#fdd86a"></div>
<div class="ab" style="left:35px;top:26px;width:1px;height:26px;background:#dcdcdc"></div>
<div class="ab" style="left:217px;top:26px;width:1px;height:26px;background:#dcdcdc"></div>
<div class="ab" style="left:327px;top:26px;width:1px;height:26px;background:#dcdcdc"></div>
<div class="ab" style="left:447px;top:26px;width:1px;height:26px;background:#dcdcdc"></div>
<div class="ab" style="left:567px;top:26px;width:1px;height:26px;background:#dcdcdc"></div>
<div class="ab" style="left:748px;top:26px;width:1px;height:26px;background:#dcdcdc"></div>
<div class="ab" style="left:930px;top:26px;width:1px;height:26px;background:#dcdcdc"></div>
<div class="ab" style="left:1112px;top:26px;width:1px;height:26px;background:#dcdcdc"></div>
<svg class="ab" style="left:0;top:26px" width="30" height="26" viewBox="0 0 30 26"><path d="M16.2 19.5 H12.5 Q11.5 19.5 11.5 18.5 V6.5 Q11.5 5.5 12.5 5.5 H21.5 Q22.5 5.5 22.5 6.5 V12.9" stroke="#444" stroke-width="1.15" fill="none"/><path d="M16.9 16.7 L19.6 19.8 L25.4 13.8" stroke="#16935a" stroke-width="2.1" fill="none"/></svg>
<div class="t" style="left:40px;top:33px;font-size:11px;color:#111;">Приход товаров</div>
<div class="t" style="left:222px;top:33px;font-size:11px;color:#111;">ПрТ-1</div>
<div class="t" style="left:332px;top:33px;font-size:11px;color:#111;letter-spacing:-0.1px;">13.06.2016 18:47:45</div>
<div class="t" style="left:448px;width:115px;text-align:right;top:33px;font-size:11px;color:#111">3 000,00</div>
<div class="t" style="left:572px;top:33px;font-size:11px;color:#111;">НатурПродукт</div>
<div class="t" style="left:753px;top:33px;font-size:11px;color:#111;">Основной склад магазина</div>
<div class="t" style="left:1117px;top:33px;font-size:11px;color:#111;">Администратор</div>
<div class="ab" style="left:0;top:52px;width:1233px;height:26px;background:#ffffff;border-bottom:1px solid #dcdcdc"></div>
<div class="ab" style="left:35px;top:52px;width:1px;height:26px;background:#dcdcdc"></div>
<div class="ab" style="left:217px;top:52px;width:1px;height:26px;background:#dcdcdc"></div>
<div class="ab" style="left:327px;top:52px;width:1px;height:26px;background:#dcdcdc"></div>
<div class="ab" style="left:447px;top:52px;width:1px;height:26px;background:#dcdcdc"></div>
<div class="ab" style="left:567px;top:52px;width:1px;height:26px;background:#dcdcdc"></div>
<div class="ab" style="left:748px;top:52px;width:1px;height:26px;background:#dcdcdc"></div>
<div class="ab" style="left:930px;top:52px;width:1px;height:26px;background:#dcdcdc"></div>
<div class="ab" style="left:1112px;top:52px;width:1px;height:26px;background:#dcdcdc"></div>
<svg class="ab" style="left:0;top:52px" width="30" height="26" viewBox="0 0 30 26"><path d="M16.2 19.5 H12.5 Q11.5 19.5 11.5 18.5 V6.5 Q11.5 5.5 12.5 5.5 H21.5 Q22.5 5.5 22.5 6.5 V12.9" stroke="#444" stroke-width="1.15" fill="none"/><path d="M16.9 16.7 L19.6 19.8 L25.4 13.8" stroke="#16935a" stroke-width="2.1" fill="none"/></svg>
<div class="t" style="left:40px;top:59px;font-size:11px;color:#111;">Расходный кассовый ордер</div>
<div class="t" style="left:222px;top:59px;font-size:11px;color:#111;">РКО-1</div>
<div class="t" style="left:332px;top:59px;font-size:11px;color:#111;letter-spacing:-0.1px;">13.06.2016 18:56:03</div>
<div class="t" style="left:448px;width:115px;text-align:right;top:59px;font-size:11px;color:#111">3 000,00</div>
<div class="t" style="left:572px;top:59px;font-size:11px;color:#111;">НатурПродукт</div>
<div class="t" style="left:935px;top:59px;font-size:11px;color:#111;">Оплата за поставку товара</div>
<div class="t" style="left:1117px;top:59px;font-size:11px;color:#111;">Администратор</div>
<div class="ab" style="left:0;top:78px;width:1233px;height:26px;background:#f2f3f5;border-bottom:1px solid #dcdcdc"></div>
<div class="ab" style="left:35px;top:78px;width:1px;height:26px;background:#dcdcdc"></div>
<div class="ab" style="left:217px;top:78px;width:1px;height:26px;background:#dcdcdc"></div>
<div class="ab" style="left:327px;top:78px;width:1px;height:26px;background:#dcdcdc"></div>
<div class="ab" style="left:447px;top:78px;width:1px;height:26px;background:#dcdcdc"></div>
<div class="ab" style="left:567px;top:78px;width:1px;height:26px;background:#dcdcdc"></div>
<div class="ab" style="left:748px;top:78px;width:1px;height:26px;background:#dcdcdc"></div>
<div class="ab" style="left:930px;top:78px;width:1px;height:26px;background:#dcdcdc"></div>
<div class="ab" style="left:1112px;top:78px;width:1px;height:26px;background:#dcdcdc"></div>
<svg class="ab" style="left:0;top:78px" width="30" height="26" viewBox="0 0 30 26"><path d="M16.2 19.5 H12.5 Q11.5 19.5 11.5 18.5 V6.5 Q11.5 5.5 12.5 5.5 H21.5 Q22.5 5.5 22.5 6.5 V12.9" stroke="#444" stroke-width="1.15" fill="none"/><path d="M16.9 16.7 L19.6 19.8 L25.4 13.8" stroke="#16935a" stroke-width="2.1" fill="none"/></svg>
<div class="t" style="left:40px;top:85px;font-size:11px;color:#111;">Ценообразование</div>
<div class="t" style="left:222px;top:85px;font-size:11px;color:#111;">Цен-1</div>
<div class="t" style="left:332px;top:85px;font-size:11px;color:#111;letter-spacing:-0.1px;">13.06.2016 18:57:33</div>
<div class="t" style="left:448px;width:115px;text-align:right;top:85px;font-size:11px;color:#f00000">-</div>
<div class="t" style="left:935px;top:85px;font-size:11px;color:#111;">На товары из: ПрТ-1 (13.06.201</div>
<div class="t" style="left:1117px;top:85px;font-size:11px;color:#111;">Администратор</div>
<div class="ab" style="left:0;top:104px;width:1233px;height:26px;background:#ffffff;border-bottom:1px solid #dcdcdc"></div>
<div class="ab" style="left:35px;top:104px;width:1px;height:26px;background:#dcdcdc"></div>
<div class="ab" style="left:217px;top:104px;width:1px;height:26px;background:#dcdcdc"></div>
<div class="ab" style="left:327px;top:104px;width:1px;height:26px;background:#dcdcdc"></div>
<div class="ab" style="left:447px;top:104px;width:1px;height:26px;background:#dcdcdc"></div>
<div class="ab" style="left:567px;top:104px;width:1px;height:26px;background:#dcdcdc"></div>
<div class="ab" style="left:748px;top:104px;width:1px;height:26px;background:#dcdcdc"></div>
<div class="ab" style="left:930px;top:104px;width:1px;height:26px;background:#dcdcdc"></div>
<div class="ab" style="left:1112px;top:104px;width:1px;height:26px;background:#dcdcdc"></div>
<svg class="ab" style="left:0;top:104px" width="30" height="26" viewBox="0 0 30 26"><path d="M16.2 19.5 H12.5 Q11.5 19.5 11.5 18.5 V6.5 Q11.5 5.5 12.5 5.5 H21.5 Q22.5 5.5 22.5 6.5 V12.9" stroke="#444" stroke-width="1.15" fill="none"/><path d="M16.9 16.7 L19.6 19.8 L25.4 13.8" stroke="#16935a" stroke-width="2.1" fill="none"/></svg>
<div class="t" style="left:40px;top:111px;font-size:11px;color:#111;">Расход товаров</div>
<div class="t" style="left:222px;top:111px;font-size:11px;color:#111;">РсТ-1</div>
<div class="t" style="left:332px;top:111px;font-size:11px;color:#111;letter-spacing:-0.1px;">13.06.2016 19:33:13</div>
<div class="t" style="left:448px;width:115px;text-align:right;top:111px;font-size:11px;color:#111">65,50</div>
<div class="t" style="left:753px;top:111px;font-size:11px;color:#111;">Основной склад магазина</div>
<div class="t" style="left:1117px;top:111px;font-size:11px;color:#111;">Администратор</div>
<div class="ab" style="left:0;top:130px;width:1233px;height:26px;background:#f2f3f5;border-bottom:1px solid #dcdcdc"></div>
<div class="ab" style="left:35px;top:130px;width:1px;height:26px;background:#dcdcdc"></div>
<div class="ab" style="left:217px;top:130px;width:1px;height:26px;background:#dcdcdc"></div>
<div class="ab" style="left:327px;top:130px;width:1px;height:26px;background:#dcdcdc"></div>
<div class="ab" style="left:447px;top:130px;width:1px;height:26px;background:#dcdcdc"></div>
<div class="ab" style="left:567px;top:130px;width:1px;height:26px;background:#dcdcdc"></div>
<div class="ab" style="left:748px;top:130px;width:1px;height:26px;background:#dcdcdc"></div>
<div class="ab" style="left:930px;top:130px;width:1px;height:26px;background:#dcdcdc"></div>
<div class="ab" style="left:1112px;top:130px;width:1px;height:26px;background:#dcdcdc"></div>
<svg class="ab" style="left:0;top:130px" width="30" height="26" viewBox="0 0 30 26"><path d="M16.2 19.5 H12.5 Q11.5 19.5 11.5 18.5 V6.5 Q11.5 5.5 12.5 5.5 H21.5 Q22.5 5.5 22.5 6.5 V12.9" stroke="#444" stroke-width="1.15" fill="none"/><path d="M16.9 16.7 L19.6 19.8 L25.4 13.8" stroke="#16935a" stroke-width="2.1" fill="none"/></svg>
<div class="t" style="left:40px;top:137px;font-size:11px;color:#111;">Приход товаров</div>
<div class="t" style="left:222px;top:137px;font-size:11px;color:#111;">ПрТ-2</div>
<div class="t" style="left:332px;top:137px;font-size:11px;color:#111;letter-spacing:-0.1px;">13.06.2016 19:36:02</div>
<div class="t" style="left:448px;width:115px;text-align:right;top:137px;font-size:11px;color:#111">4 600,00</div>
<div class="t" style="left:572px;top:137px;font-size:11px;color:#111;">Иванов Иван Иванович</div>
<div class="t" style="left:753px;top:137px;font-size:11px;color:#111;">Основной склад магазина</div>
<div class="t" style="left:1117px;top:137px;font-size:11px;color:#111;">Администратор</div>
<div class="ab" style="left:0;top:156px;width:1233px;height:26px;background:#ffffff;border-bottom:1px solid #dcdcdc"></div>
<div class="ab" style="left:35px;top:156px;width:1px;height:26px;background:#dcdcdc"></div>
<div class="ab" style="left:217px;top:156px;width:1px;height:26px;background:#dcdcdc"></div>
<div class="ab" style="left:327px;top:156px;width:1px;height:26px;background:#dcdcdc"></div>
<div class="ab" style="left:447px;top:156px;width:1px;height:26px;background:#dcdcdc"></div>
<div class="ab" style="left:567px;top:156px;width:1px;height:26px;background:#dcdcdc"></div>
<div class="ab" style="left:748px;top:156px;width:1px;height:26px;background:#dcdcdc"></div>
<div class="ab" style="left:930px;top:156px;width:1px;height:26px;background:#dcdcdc"></div>
<div class="ab" style="left:1112px;top:156px;width:1px;height:26px;background:#dcdcdc"></div>
<svg class="ab" style="left:0;top:156px" width="30" height="26" viewBox="0 0 30 26"><path d="M16.2 19.5 H12.5 Q11.5 19.5 11.5 18.5 V6.5 Q11.5 5.5 12.5 5.5 H21.5 Q22.5 5.5 22.5 6.5 V12.9" stroke="#444" stroke-width="1.15" fill="none"/><path d="M16.9 16.7 L19.6 19.8 L25.4 13.8" stroke="#16935a" stroke-width="2.1" fill="none"/></svg>
<div class="t" style="left:40px;top:163px;font-size:11px;color:#111;">Ценообразование</div>
<div class="t" style="left:222px;top:163px;font-size:11px;color:#111;">Цен-2</div>
<div class="t" style="left:332px;top:163px;font-size:11px;color:#111;letter-spacing:-0.1px;">13.06.2016 19:36:48</div>
<div class="t" style="left:448px;width:115px;text-align:right;top:163px;font-size:11px;color:#f00000">-</div>
<div class="t" style="left:1117px;top:163px;font-size:11px;color:#111;">Администратор</div>
<div class="ab" style="left:0;top:182px;width:1233px;height:26px;background:#f2f3f5;border-bottom:1px solid #dcdcdc"></div>
<div class="ab" style="left:35px;top:182px;width:1px;height:26px;background:#dcdcdc"></div>
<div class="ab" style="left:217px;top:182px;width:1px;height:26px;background:#dcdcdc"></div>
<div class="ab" style="left:327px;top:182px;width:1px;height:26px;background:#dcdcdc"></div>
<div class="ab" style="left:447px;top:182px;width:1px;height:26px;background:#dcdcdc"></div>
<div class="ab" style="left:567px;top:182px;width:1px;height:26px;background:#dcdcdc"></div>
<div class="ab" style="left:748px;top:182px;width:1px;height:26px;background:#dcdcdc"></div>
<div class="ab" style="left:930px;top:182px;width:1px;height:26px;background:#dcdcdc"></div>
<div class="ab" style="left:1112px;top:182px;width:1px;height:26px;background:#dcdcdc"></div>
<svg class="ab" style="left:0;top:182px" width="30" height="26" viewBox="0 0 30 26"><path d="M16.2 19.5 H12.5 Q11.5 19.5 11.5 18.5 V6.5 Q11.5 5.5 12.5 5.5 H21.5 Q22.5 5.5 22.5 6.5 V12.9" stroke="#444" stroke-width="1.15" fill="none"/><path d="M16.9 16.7 L19.6 19.8 L25.4 13.8" stroke="#16935a" stroke-width="2.1" fill="none"/></svg>
<div class="t" style="left:40px;top:189px;font-size:11px;color:#111;">Расход товаров</div>
<div class="t" style="left:222px;top:189px;font-size:11px;color:#111;">РсТ-2</div>
<div class="t" style="left:332px;top:189px;font-size:11px;color:#111;letter-spacing:-0.1px;">13.06.2016 19:38:10</div>
<div class="t" style="left:448px;width:115px;text-align:right;top:189px;font-size:11px;color:#111">315,70</div>
<div class="t" style="left:753px;top:189px;font-size:11px;color:#111;">Основной склад магазина</div>
<div class="t" style="left:1117px;top:189px;font-size:11px;color:#111;">Администратор</div>
<div class="ab" style="left:0;top:208px;width:1233px;height:26px;background:#ffffff;border-bottom:1px solid #dcdcdc"></div>
<div class="ab" style="left:35px;top:208px;width:1px;height:26px;background:#dcdcdc"></div>
<div class="ab" style="left:217px;top:208px;width:1px;height:26px;background:#dcdcdc"></div>
<div class="ab" style="left:327px;top:208px;width:1px;height:26px;background:#dcdcdc"></div>
<div class="ab" style="left:447px;top:208px;width:1px;height:26px;background:#dcdcdc"></div>
<div class="ab" style="left:567px;top:208px;width:1px;height:26px;background:#dcdcdc"></div>
<div class="ab" style="left:748px;top:208px;width:1px;height:26px;background:#dcdcdc"></div>
<div class="ab" style="left:930px;top:208px;width:1px;height:26px;background:#dcdcdc"></div>
<div class="ab" style="left:1112px;top:208px;width:1px;height:26px;background:#dcdcdc"></div>
<svg class="ab" style="left:0;top:208px" width="30" height="26" viewBox="0 0 30 26"><path d="M16.2 19.5 H12.5 Q11.5 19.5 11.5 18.5 V6.5 Q11.5 5.5 12.5 5.5 H21.5 Q22.5 5.5 22.5 6.5 V12.9" stroke="#444" stroke-width="1.15" fill="none"/><path d="M16.9 16.7 L19.6 19.8 L25.4 13.8" stroke="#16935a" stroke-width="2.1" fill="none"/></svg>
<div class="t" style="left:40px;top:215px;font-size:11px;color:#111;">Расход товаров</div>
<div class="t" style="left:222px;top:215px;font-size:11px;color:#111;">РсТ-3</div>
<div class="t" style="left:332px;top:215px;font-size:11px;color:#111;letter-spacing:-0.1px;">13.06.2016 19:38:55</div>
<div class="t" style="left:448px;width:115px;text-align:right;top:215px;font-size:11px;color:#111">430,50</div>
<div class="t" style="left:753px;top:215px;font-size:11px;color:#111;">Основной склад магазина</div>
<div class="t" style="left:1117px;top:215px;font-size:11px;color:#111;">Администратор</div>
<div class="ab" style="left:0;top:234px;width:1233px;height:26px;background:#f2f3f5;border-bottom:1px solid #dcdcdc"></div>
<div class="ab" style="left:35px;top:234px;width:1px;height:26px;background:#dcdcdc"></div>
<div class="ab" style="left:217px;top:234px;width:1px;height:26px;background:#dcdcdc"></div>
<div class="ab" style="left:327px;top:234px;width:1px;height:26px;background:#dcdcdc"></div>
<div class="ab" style="left:447px;top:234px;width:1px;height:26px;background:#dcdcdc"></div>
<div class="ab" style="left:567px;top:234px;width:1px;height:26px;background:#dcdcdc"></div>
<div class="ab" style="left:748px;top:234px;width:1px;height:26px;background:#dcdcdc"></div>
<div class="ab" style="left:930px;top:234px;width:1px;height:26px;background:#dcdcdc"></div>
<div class="ab" style="left:1112px;top:234px;width:1px;height:26px;background:#dcdcdc"></div>
<svg class="ab" style="left:0;top:234px" width="30" height="26" viewBox="0 0 30 26"><rect x="11.5" y="5.5" width="11" height="14" rx="1" stroke="#444" stroke-width="1.15" fill="none"/></svg>
<div class="t" style="left:40px;top:241px;font-size:11px;color:#111;">Перемещение товаров</div>
<div class="t" style="left:222px;top:241px;font-size:11px;color:#111;">Пер-1</div>
<div class="t" style="left:332px;top:241px;font-size:11px;color:#111;letter-spacing:-0.1px;">13.06.2016 19:42:51</div>
<div class="t" style="left:448px;width:115px;text-align:right;top:241px;font-size:11px;color:#f00000">-</div>
<div class="t" style="left:753px;top:241px;font-size:11px;color:#111;">Основной склад магазина</div>
<div class="t" style="left:1117px;top:241px;font-size:11px;color:#111;">Администратор</div>
<div class="ab" style="left:0;top:260px;width:1233px;height:26px;background:#ffffff;border-bottom:1px solid #dcdcdc"></div>
<div class="ab" style="left:35px;top:260px;width:1px;height:26px;background:#dcdcdc"></div>
<div class="ab" style="left:217px;top:260px;width:1px;height:26px;background:#dcdcdc"></div>
<div class="ab" style="left:327px;top:260px;width:1px;height:26px;background:#dcdcdc"></div>
<div class="ab" style="left:447px;top:260px;width:1px;height:26px;background:#dcdcdc"></div>
<div class="ab" style="left:567px;top:260px;width:1px;height:26px;background:#dcdcdc"></div>
<div class="ab" style="left:748px;top:260px;width:1px;height:26px;background:#dcdcdc"></div>
<div class="ab" style="left:930px;top:260px;width:1px;height:26px;background:#dcdcdc"></div>
<div class="ab" style="left:1112px;top:260px;width:1px;height:26px;background:#dcdcdc"></div>
<svg class="ab" style="left:0;top:260px" width="30" height="26" viewBox="0 0 30 26"><path d="M16.2 19.5 H12.5 Q11.5 19.5 11.5 18.5 V6.5 Q11.5 5.5 12.5 5.5 H21.5 Q22.5 5.5 22.5 6.5 V12.9" stroke="#444" stroke-width="1.15" fill="none"/><path d="M16.9 16.7 L19.6 19.8 L25.4 13.8" stroke="#16935a" stroke-width="2.1" fill="none"/></svg>
<div class="t" style="left:40px;top:267px;font-size:11px;color:#111;">Инвентаризация</div>
<div class="t" style="left:222px;top:267px;font-size:11px;color:#111;">Инв-1</div>
<div class="t" style="left:332px;top:267px;font-size:11px;color:#111;letter-spacing:-0.1px;">13.06.2016 19:45:21</div>
<div class="t" style="left:448px;width:115px;text-align:right;top:267px;font-size:11px;color:#f00000">-50,00</div>
<div class="t" style="left:753px;top:267px;font-size:11px;color:#111;">Основной склад магазина</div>
<div class="t" style="left:1117px;top:267px;font-size:11px;color:#111;">Администратор</div>
<div class="ab" style="left:0;top:286px;width:1233px;height:26px;background:#f2f3f5;border-bottom:1px solid #dcdcdc"></div>
<div class="ab" style="left:35px;top:286px;width:1px;height:26px;background:#dcdcdc"></div>
<div class="ab" style="left:217px;top:286px;width:1px;height:26px;background:#dcdcdc"></div>
<div class="ab" style="left:327px;top:286px;width:1px;height:26px;background:#dcdcdc"></div>
<div class="ab" style="left:447px;top:286px;width:1px;height:26px;background:#dcdcdc"></div>
<div class="ab" style="left:567px;top:286px;width:1px;height:26px;background:#dcdcdc"></div>
<div class="ab" style="left:748px;top:286px;width:1px;height:26px;background:#dcdcdc"></div>
<div class="ab" style="left:930px;top:286px;width:1px;height:26px;background:#dcdcdc"></div>
<div class="ab" style="left:1112px;top:286px;width:1px;height:26px;background:#dcdcdc"></div>
<svg class="ab" style="left:0;top:286px" width="30" height="26" viewBox="0 0 30 26"><path d="M16.2 19.5 H12.5 Q11.5 19.5 11.5 18.5 V6.5 Q11.5 5.5 12.5 5.5 H21.5 Q22.5 5.5 22.5 6.5 V12.9" stroke="#444" stroke-width="1.15" fill="none"/><path d="M16.9 16.7 L19.6 19.8 L25.4 13.8" stroke="#16935a" stroke-width="2.1" fill="none"/></svg>
<div class="t" style="left:40px;top:293px;font-size:11px;color:#111;">Расходный кассовый ордер</div>
<div class="t" style="left:222px;top:293px;font-size:11px;color:#111;">РКО-2</div>
<div class="t" style="left:332px;top:293px;font-size:11px;color:#111;letter-spacing:-0.1px;">13.06.2016 19:48:21</div>
<div class="t" style="left:448px;width:115px;text-align:right;top:293px;font-size:11px;color:#111">1 000,00</div>
<div class="t" style="left:572px;top:293px;font-size:11px;color:#111;">НатурПродукт</div>
<div class="t" style="left:1117px;top:293px;font-size:11px;color:#111;">Администратор</div>
<div class="ab" style="left:0;top:312px;width:1233px;height:26px;background:#ffffff;border-bottom:1px solid #dcdcdc"></div>
<div class="ab" style="left:35px;top:312px;width:1px;height:26px;background:#dcdcdc"></div>
<div class="ab" style="left:217px;top:312px;width:1px;height:26px;background:#dcdcdc"></div>
<div class="ab" style="left:327px;top:312px;width:1px;height:26px;background:#dcdcdc"></div>
<div class="ab" style="left:447px;top:312px;width:1px;height:26px;background:#dcdcdc"></div>
<div class="ab" style="left:567px;top:312px;width:1px;height:26px;background:#dcdcdc"></div>
<div class="ab" style="left:748px;top:312px;width:1px;height:26px;background:#dcdcdc"></div>
<div class="ab" style="left:930px;top:312px;width:1px;height:26px;background:#dcdcdc"></div>
<div class="ab" style="left:1112px;top:312px;width:1px;height:26px;background:#dcdcdc"></div>
<svg class="ab" style="left:0;top:312px" width="30" height="26" viewBox="0 0 30 26"><path d="M16.2 19.5 H12.5 Q11.5 19.5 11.5 18.5 V6.5 Q11.5 5.5 12.5 5.5 H21.5 Q22.5 5.5 22.5 6.5 V12.9" stroke="#444" stroke-width="1.15" fill="none"/><path d="M16.9 16.7 L19.6 19.8 L25.4 13.8" stroke="#16935a" stroke-width="2.1" fill="none"/></svg>
<div class="t" style="left:40px;top:319px;font-size:11px;color:#111;">Ценообразование</div>
<div class="t" style="left:222px;top:319px;font-size:11px;color:#111;">Цен-3</div>
<div class="t" style="left:332px;top:319px;font-size:11px;color:#111;letter-spacing:-0.1px;">13.06.2016 19:50:35</div>
<div class="t" style="left:448px;width:115px;text-align:right;top:319px;font-size:11px;color:#f00000">-</div>
<div class="t" style="left:1117px;top:319px;font-size:11px;color:#111;">Администратор</div>
<div class="ab" style="left:0;top:338px;width:1233px;height:26px;background:#f2f3f5;border-bottom:1px solid #dcdcdc"></div>
<div class="ab" style="left:35px;top:338px;width:1px;height:26px;background:#dcdcdc"></div>
<div class="ab" style="left:217px;top:338px;width:1px;height:26px;background:#dcdcdc"></div>
<div class="ab" style="left:327px;top:338px;width:1px;height:26px;background:#dcdcdc"></div>
<div class="ab" style="left:447px;top:338px;width:1px;height:26px;background:#dcdcdc"></div>
<div class="ab" style="left:567px;top:338px;width:1px;height:26px;background:#dcdcdc"></div>
<div class="ab" style="left:748px;top:338px;width:1px;height:26px;background:#dcdcdc"></div>
<div class="ab" style="left:930px;top:338px;width:1px;height:26px;background:#dcdcdc"></div>
<div class="ab" style="left:1112px;top:338px;width:1px;height:26px;background:#dcdcdc"></div>
<svg class="ab" style="left:0;top:338px" width="30" height="26" viewBox="0 0 30 26"><path d="M16.2 19.5 H12.5 Q11.5 19.5 11.5 18.5 V6.5 Q11.5 5.5 12.5 5.5 H21.5 Q22.5 5.5 22.5 6.5 V12.9" stroke="#444" stroke-width="1.15" fill="none"/><path d="M16.9 16.7 L19.6 19.8 L25.4 13.8" stroke="#16935a" stroke-width="2.1" fill="none"/></svg>
<div class="t" style="left:40px;top:345px;font-size:11px;color:#111;">Приход товаров</div>
<div class="t" style="left:222px;top:345px;font-size:11px;color:#111;">ПрТ-3</div>
<div class="t" style="left:332px;top:345px;font-size:11px;color:#111;letter-spacing:-0.1px;">13.06.2016 19:52:27</div>
<div class="t" style="left:448px;width:115px;text-align:right;top:345px;font-size:11px;color:#111">1 786,50</div>
<div class="t" style="left:572px;top:345px;font-size:11px;color:#111;">Первый склад продуктов</div>
<div class="t" style="left:753px;top:345px;font-size:11px;color:#111;">Основной склад магазина</div>
<div class="t" style="left:1117px;top:345px;font-size:11px;color:#111;">Администратор</div>
</div>
<div class="ab" style="left:2px;top:621px;width:1233px;height:26px;background:#dfe2e7;border-top:1px solid #b0b4ba"></div>
<div class="ab" style="left:38px;top:622px;width:182px;height:25px;background:linear-gradient(#fdd35a,#fee77c)"></div>
<div class="ab" style="left:37px;top:622px;width:1px;height:25px;background:#c3c6cc"></div>
<div class="ab" style="left:219px;top:622px;width:1px;height:25px;background:#c3c6cc"></div>
<div class="ab" style="left:329px;top:622px;width:1px;height:25px;background:#c3c6cc"></div>
<div class="ab" style="left:449px;top:622px;width:1px;height:25px;background:#c3c6cc"></div>
<div class="ab" style="left:569px;top:622px;width:1px;height:25px;background:#c3c6cc"></div>
<div class="ab" style="left:750px;top:622px;width:1px;height:25px;background:#c3c6cc"></div>
<div class="ab" style="left:932px;top:622px;width:1px;height:25px;background:#c3c6cc"></div>
<div class="ab" style="left:1114px;top:622px;width:1px;height:25px;background:#c3c6cc"></div>
<div class="t" style="left:330px;width:115px;text-align:right;top:628px;font-size:11.6px;color:#444">Итого:</div>
<div class="t" style="left:450px;width:114px;text-align:right;top:629px;font-size:12.4px;font-weight:bold;color:#333">648 274,98</div>
<div class="ab" style="left:1234px;top:242px;width:1px;height:405px;background:#d2d2d2"></div>
<div class="ab" style="left:1234px;top:242px;width:1px;height:26px;background:#a9adb3"></div>
<div class="ab" style="left:1234px;top:622px;width:1px;height:25px;background:#a9adb3"></div>
<div class="ab" style="left:1235px;top:242px;width:17px;height:405px;background:#f0f0f0;border-left:1px solid #fafafa"></div>
<div class="ab" style="left:1236px;top:259px;width:15px;height:17px;background:#c8c8c8"></div>
<svg class="ab" style="left:1239px;top:247px" width="10" height="8" viewBox="0 0 10 8"><path d="M1 6.6L4.5 2.6L8 6.6" stroke="#444" stroke-width="2" fill="none"/></svg>
<svg class="ab" style="left:1239px;top:635px" width="10" height="8" viewBox="0 0 10 8"><path d="M1 1.4L4.5 5.4L8 1.4" stroke="#444" stroke-width="2" fill="none"/></svg>
</body></html>
